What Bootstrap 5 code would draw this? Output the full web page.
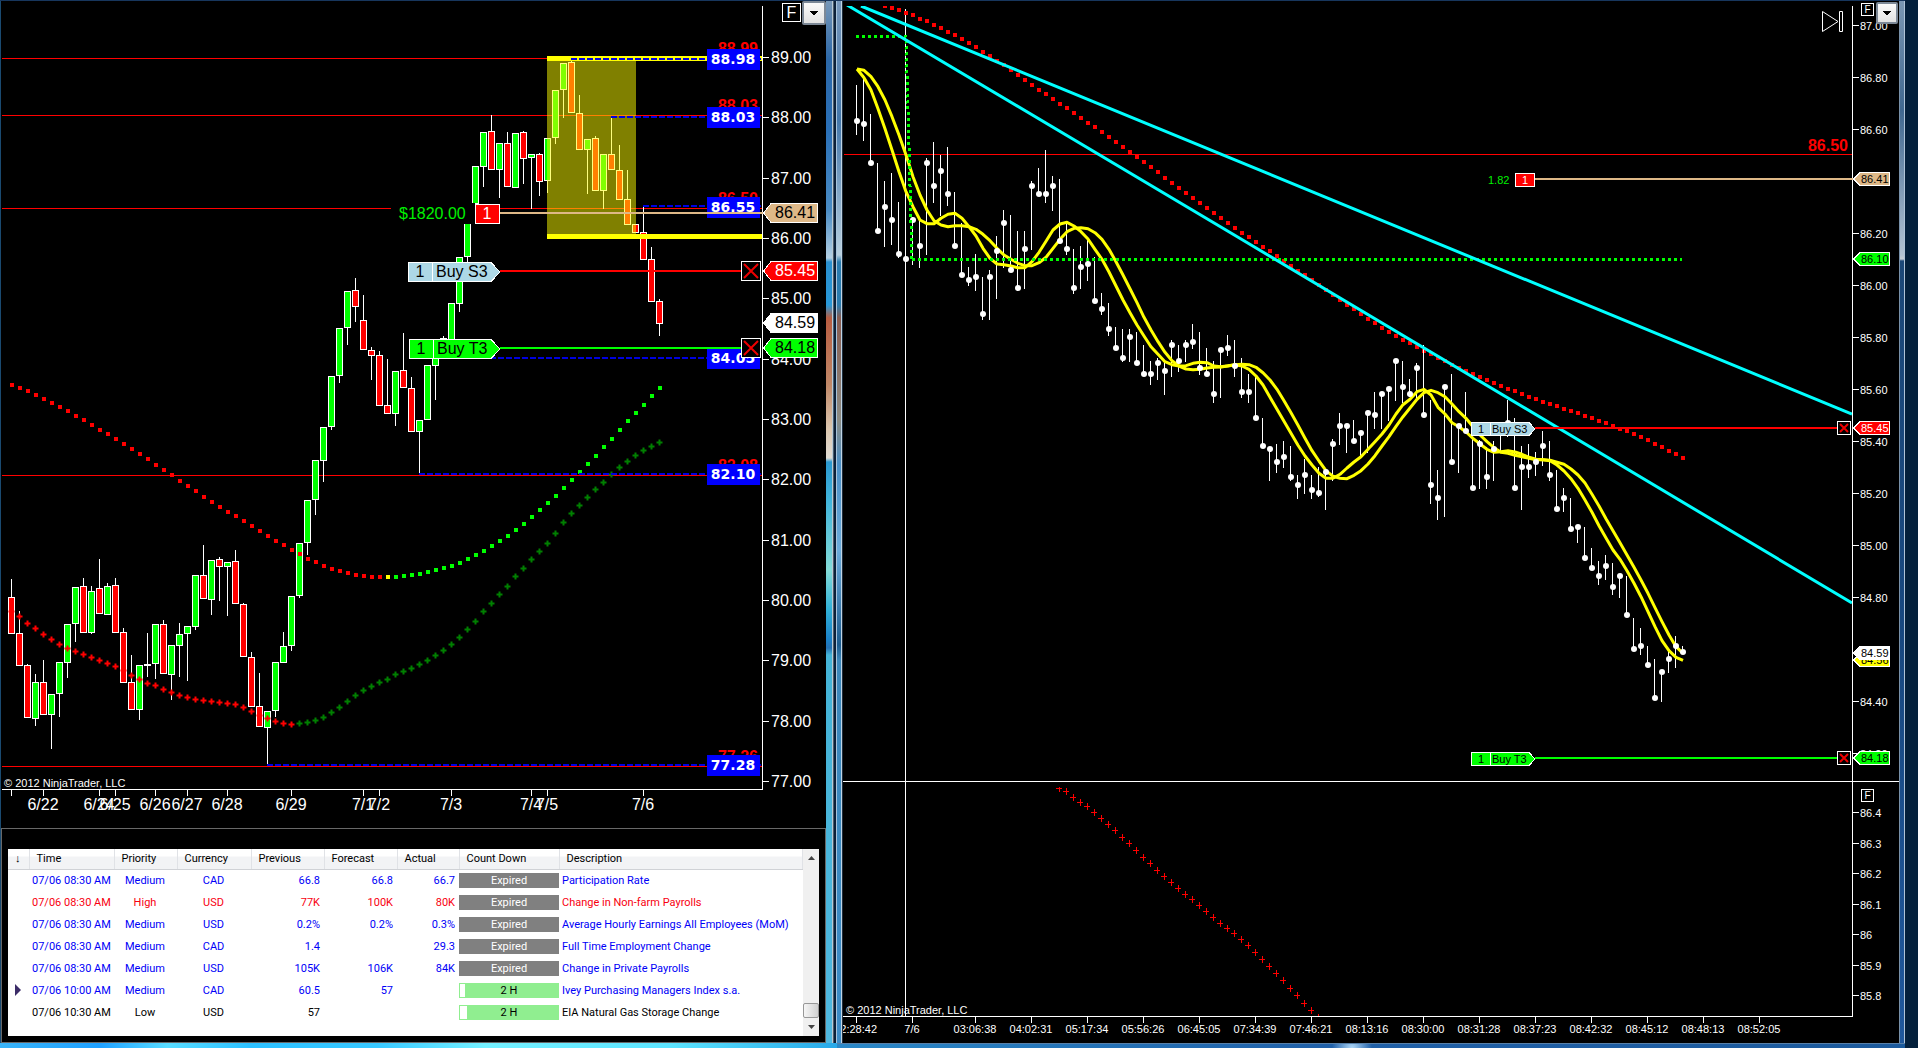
<!DOCTYPE html>
<html lang="en">
<head>
<meta charset="utf-8">
<meta name="viewport" content="width=device-width, initial-scale=1">
<title>NinjaTrader charts</title>
<link href="https://cdn.jsdelivr.net/npm/bootstrap@5.3.0/dist/css/bootstrap.min.css" rel="stylesheet">
<style>
  body { background: #04203c; font-family: "Liberation Sans", Arial, sans-serif; }
  .desk { display: grid; grid-template-columns: minmax(0, 837fr) minmax(0, 1068fr) minmax(0, 13fr); }

  /* glass window frames */
  .win-left {
    padding: 1px 11px 5px 1px;
    background:
      linear-gradient(#17365d, #17365d) top / 100% 1px no-repeat,
      linear-gradient(90deg, #3ab4f8, #1ea0ff 12%, #58dcff 20%, #2cc0ff 30%, #38c8ff 45%, #74f0ff 58%, #5ce4ff 80%, #28a8e8) bottom / 100% 5px no-repeat,
      linear-gradient(90deg, transparent 6px, #b8c8d4 6px 7px, #4a5c6c 7px 8px, #0c2038 8px 10px, #a8c4dc 10px) right / 11px 100% no-repeat,
      linear-gradient(90deg, #1a4a70 1px, transparent 1px),
      linear-gradient(#7898b8 0, #2c68a8 60px, #2a70b8 130px, #4a8cc4 210px, #b4d0e4 258px, #2a90d0 262px, #2898d8 305px, #b85c40 318px, #c08868 385px, #dcc8b0 430px, #e0dcd4 458px, #2a98d0 462px, #40b4dc 500px, #84dcd8 570px, #30b0d8 610px, #1a80c8 640px, #2470b4 648px, #44b4d8 655px, #50b8e0 100%);
  }
  .win-right {
    padding: 1px 6px 5px 6px;
    background:
      linear-gradient(#17365d, #17365d) top / 100% 1px no-repeat,
      linear-gradient(#5880a8, #5880a8) 0 calc(100% - 4px) / 100% 1px no-repeat,
      radial-gradient(circle at 515px 4px, #b0d8f8, transparent 20px) bottom / 100% 4px no-repeat,
      linear-gradient(90deg, #2a88c8, #2060a8 45%, #1c5a9c) bottom / 100% 4px no-repeat,
      linear-gradient(90deg, #7890a8 1px, transparent 1px 5px, #b0c4d8 5px) right / 6px 100% no-repeat,
      linear-gradient(#7c98b4 0, #406890 110px, #b4c4d4 255px, #c8d0d8 259px, #1c4878 261px, #184880 60%, #20589c 100%) right / 6px 100% no-repeat,
      linear-gradient(90deg, transparent 4px, #c0d4e4 4px 5px, #203040 5px) left / 6px 100% no-repeat,
      linear-gradient(#7898bc 0, #4478ac 120px, #b8d0e0 255px, #2a7cb0 262px, #2a7cb0 305px, #8a5c50 318px, #8c8c84 420px, #4a90c8 465px, #6cacdc 550px, #1c5c90 645px, #3c88bc 660px, #3c8cc8 100%);
  }
  .chart-svg { display: block; width: 100%; height: 100%; background: #000; shape-rendering: crispEdges; font-family: "Liberation Sans", Arial, sans-serif; }
  .t16 { font-size: 16px; fill: #fff; }
  .t11 { font-size: 11px; fill: #fff; }
  .mid { text-anchor: middle; }
  .right { text-anchor: end; }
  .lvl-red { fill: #f00; font-size: 16px; font-weight: 700; text-anchor: end; }
  .lvl-blue { fill: #fff; font: 700 14px "DejaVu Sans", sans-serif; text-anchor: middle; }
  .ink { fill: #000; }
  .gain { fill: #00f000; }

  .box-btn { display: block; width: 100%; height: 100%; padding: 0; border: 1px solid #fff; background: #000; color: #fff; line-height: 1; text-align: center; }
  .box-btn svg { display: block; width: 100%; height: 100%; shape-rendering: auto; }
  .f16 { font-size: 16px; }
  .f11 { font-size: 10px; }
  .drop-btn { display: block; width: 100%; height: 100%; padding: 0; border: 2px solid #7c8896; background: linear-gradient(#fafafa, #e2e2e2); border-radius: 2px; }
  .drop-btn svg { display: block; width: 100%; height: 100%; }

  /* economic calendar */
  .cal-panel { border: 1px solid #686868; padding: 20px 6px 6px 6px; background: #000; }
  .cal-box { background: #fff; min-height: 187px; }
  .cal-table { table-layout: fixed; width: 100%; font-family: Roboto, "Liberation Sans", sans-serif; font-size: 11px; line-height: 15px; color: #000; --bs-table-bg: transparent; }
  .cal-table th { height: 20px; padding: 0 0 0 7px; font-weight: 400; vertical-align: middle; white-space: nowrap; border: 0; border-right: 1px solid #e0e2e6; border-bottom: 1px solid #d0d2d6; background: linear-gradient(#fff 35%, #f2f3f5 40%); }
  .cal-table td { height: 22px; padding: 0 4px 0 3px; color: inherit; white-space: nowrap; border: 0; vertical-align: middle; overflow: hidden; }
  .cal-table td.cd-cell { padding: 0; }
  .imp-med { color: #0000f8; }
  .imp-high { color: #f80010; }
  .cd { height: 15px; text-align: center; }
  .cd-exp { background: #808080; color: #fff; }
  .cd-run { line-height: 13px; border: 1px solid #90ee90; color: #000; background: linear-gradient(90deg, #fff var(--gone), #90ee90 0); }
  .sbar { width: 16px; background: #f0f0f0; }
  .sbar button { padding: 0; border: 0; background: transparent; height: 18px; line-height: 0; }
  .sthumb { height: 15px; border: 1px solid #989898; border-radius: 2px; background: linear-gradient(90deg, #f6f6f6, #d0d0d0); }
</style>
<script src="https://cdn.jsdelivr.net/npm/bootstrap@5.3.0/dist/js/bootstrap.bundle.min.js"></script>
</head>
<body>
<main class="desk vh-100 overflow-hidden">

  <section class="win-left d-flex flex-column vh-100" aria-label="Session chart and calendar">
    <div class="flex-grow-1" style="min-height:0">
      <svg class="chart-svg" viewBox="1 1 825 827" role="group" aria-label="Candlestick chart">
        <g id="l-levels"></g>
        <g id="l-candles"></g>
        <rect x="547" y="56" width="89" height="183" fill="#ff0" fill-opacity=".5"/>
        <path d="M547 58.5H762M547 236.5H762" stroke="#ff0" stroke-width="5"/>
        <g id="l-ma"></g>
        <g id="l-tags-low"></g>
        <path d="M762.5 6V789.5M2 789.5H763" stroke="#fff" fill="none"/>
        <g id="l-axis"></g>
        <text class="t11" x="4" y="787">© 2012 NinjaTrader, LLC</text>

        <rect x="391" y="203" width="84" height="21" fill="#000"/>
        <text class="t16 gain" x="399" y="219">$1820.00</text>
        <path d="M500 213H763" stroke="#deb887" stroke-width="2"/>
        <rect x="475.500" y="204.500" width="24" height="19" fill="#f00" stroke="#fff"/>
        <text class="t16 mid" x="487" y="219">1</text>
        <path d="M500 271H741" stroke="#f00" stroke-width="2"/>
        <path d="M408.500 262.500H491L500 272L491 281.500H408.500ZM432.500 262V282" fill="#add8e6" stroke="#fff"/>
        <text class="t16 ink mid" x="420" y="277">1</text>
        <text class="t16 ink" x="436" y="277">Buy S3</text>
        <path d="M500 348H741" stroke="#0f0" stroke-width="2"/>
        <path d="M409.500 339.500H491L500 349L491 358.500H409.500ZM433.500 339V359" fill="#0f0" stroke="#fff"/>
        <text class="t16 ink mid" x="421" y="354">1</text>
        <text class="t16 ink" x="437" y="354">Buy T3</text>
        <g id="l-prices"></g>
        <foreignObject x="741" y="261" width="20" height="20"><button type="button" class="box-btn" aria-label="Cancel Buy S3"><svg viewBox="0 0 18 18"><path d="M2 2L16 16M16 2L2 16" stroke="#e00" stroke-width="2"/></svg></button></foreignObject>
        <foreignObject x="741" y="338" width="20" height="20"><button type="button" class="box-btn" aria-label="Cancel Buy T3"><svg viewBox="0 0 18 18"><path d="M2 2L16 16M16 2L2 16" stroke="#e00" stroke-width="2"/></svg></button></foreignObject>
        <foreignObject x="782" y="3" width="19" height="19"><button type="button" class="box-btn f16">F</button></foreignObject>
        <foreignObject x="802" y="1" width="24" height="24"><button type="button" class="drop-btn" aria-label="Chart menu"><svg viewBox="0 0 20 20"><path d="M5 7.500H15L10 12.500Z" fill="#000"/></svg></button></foreignObject>
      </svg>
    </div>

    <div class="cal-panel">
      <div class="cal-box d-flex">
        <div class="flex-grow-1 overflow-hidden">
          <table class="table table-borderless cal-table mb-0">
            <colgroup><col style="width:21px"><col style="width:85px"><col style="width:63px"><col style="width:74px"><col style="width:73px"><col style="width:73px"><col style="width:62px"><col style="width:100px"><col></colgroup>
            <thead><tr><th scope="col">↓</th><th scope="col">Time</th><th scope="col">Priority</th><th scope="col">Currency</th><th scope="col">Previous</th><th scope="col">Forecast</th><th scope="col">Actual</th><th scope="col">Count Down</th><th scope="col">Description</th></tr></thead>
            <tbody>
              <tr class="imp-med"><td></td><td>07/06 08:30 AM</td><td class="text-center">Medium</td><td class="text-center">CAD</td><td class="text-end">66.8</td><td class="text-end">66.8</td><td class="text-end">66.7</td><td class="cd-cell"><div class="cd cd-exp">Expired</div></td><td>Participation Rate</td></tr>
              <tr class="imp-high"><td></td><td>07/06 08:30 AM</td><td class="text-center">High</td><td class="text-center">USD</td><td class="text-end">77K</td><td class="text-end">100K</td><td class="text-end">80K</td><td class="cd-cell"><div class="cd cd-exp">Expired</div></td><td>Change in Non-farm Payrolls</td></tr>
              <tr class="imp-med"><td></td><td>07/06 08:30 AM</td><td class="text-center">Medium</td><td class="text-center">USD</td><td class="text-end">0.2%</td><td class="text-end">0.2%</td><td class="text-end">0.3%</td><td class="cd-cell"><div class="cd cd-exp">Expired</div></td><td>Average Hourly Earnings All Employees (MoM)</td></tr>
              <tr class="imp-med"><td></td><td>07/06 08:30 AM</td><td class="text-center">Medium</td><td class="text-center">CAD</td><td class="text-end">1.4</td><td></td><td class="text-end">29.3</td><td class="cd-cell"><div class="cd cd-exp">Expired</div></td><td>Full Time Employment Change</td></tr>
              <tr class="imp-med"><td></td><td>07/06 08:30 AM</td><td class="text-center">Medium</td><td class="text-center">USD</td><td class="text-end">105K</td><td class="text-end">106K</td><td class="text-end">84K</td><td class="cd-cell"><div class="cd cd-exp">Expired</div></td><td>Change in Private Payrolls</td></tr>
              <tr class="imp-med"><td><svg class="d-block ms-1" width="6" height="12" viewBox="0 0 6 12" aria-hidden="true"><path d="M0 0L6 6L0 12Z" fill="#3c2c68"/></svg></td><td>07/06 10:00 AM</td><td class="text-center">Medium</td><td class="text-center">CAD</td><td class="text-end">60.5</td><td class="text-end">57</td><td></td><td class="cd-cell"><div class="cd cd-run" style="--gone:5%">2 H</div></td><td>Ivey Purchasing Managers Index s.a.</td></tr>
              <tr><td></td><td>07/06 10:30 AM</td><td class="text-center">Low</td><td class="text-center">USD</td><td class="text-end">57</td><td></td><td></td><td class="cd-cell"><div class="cd cd-run" style="--gone:7%">2 H</div></td><td>EIA Natural Gas Storage Change</td></tr>
            </tbody>
          </table>
        </div>
        <div class="sbar d-flex flex-column flex-shrink-0">
          <button type="button" aria-label="Scroll up"><svg width="7" height="4" viewBox="0 0 7 4"><path d="M0 4L3.500 0L7 4Z" fill="#444"/></svg></button>
          <div class="flex-grow-1"></div>
          <div class="sthumb"></div>
          <button type="button" aria-label="Scroll down"><svg width="7" height="4" viewBox="0 0 7 4"><path d="M0 0H7L3.500 4Z" fill="#444"/></svg></button>
        </div>
      </div>
    </div>
  </section>

  <section class="win-right vh-100" aria-label="Intraday chart">
    <svg class="chart-svg" viewBox="843 1 1056 1042" role="group" aria-label="Intraday range chart">
      <defs>
        <clipPath id="up"><rect x="843" y="6" width="1009" height="775"/></clipPath>
        <clipPath id="low"><rect x="843" y="787" width="1009" height="229"/></clipPath>
      </defs>
      <path d="M844 154.500H1852" stroke="#f00"/>
      <text class="lvl-red" x="1848" y="151">86.50</text>
      <path d="M905.500 9V1016" stroke="#fff"/>
      <g clip-path="url(#up)">
        <g id="r-red" fill="#f00"></g>
        <g id="r-bars" stroke="#fff"></g>
        <g id="r-yellow" fill="none" stroke="#ff0" stroke-width="3" stroke-linejoin="round" shape-rendering="auto"></g>
        <g id="r-dots" fill="#fff" shape-rendering="auto"></g>
        <path d="M856 36.500H906L912 259.500" fill="none" stroke="#0f0" stroke-width="3" stroke-dasharray="3 3"/>
        <path d="M912 259.500H1682" fill="none" stroke="#0f0" stroke-width="3" stroke-dasharray="3 3"/>
        <path d="M861 6L1852 414M847 5L1236 236L1852 603" fill="none" stroke="#0ff" stroke-width="3" shape-rendering="auto"/>
      </g>
      <g id="r-plus" stroke="#f00" clip-path="url(#low)"></g>
      <path d="M842 781.500H1899M1852.500 6V1016.500M843 1016.500H1853" stroke="#fff" fill="none"/>
      <g id="r-axis"></g>
      <text class="t11" x="846" y="1014">© 2012 NinjaTrader, LLC</text>
      <path d="M1822.500 11.500V31.500L1838 21.500ZM1839.500 11.500H1842.500V31.500H1839.500Z" stroke="#fff" fill="none" shape-rendering="auto"/>

      <text class="t11 gain" x="1488" y="184">1.82</text>
      <path d="M1535 179H1853" stroke="#deb887" stroke-width="2"/>
      <rect x="1515.500" y="173.500" width="19" height="13" fill="#f00" stroke="#fff"/>
      <text class="t11 mid" x="1525" y="184">1</text>
      <path d="M1535 428H1837" stroke="#f00" stroke-width="2"/>
      <path d="M1471.500 422.500H1529L1535 429L1529 435.500H1471.500ZM1490.500 422V436" fill="#add8e6" stroke="#fff"/>
      <text class="t11 ink mid" x="1481" y="433">1</text>
      <text class="t11 ink" x="1492" y="433">Buy S3</text>
      <path d="M1535 758H1837" stroke="#0f0" stroke-width="2"/>
      <path d="M1471.500 752.500H1529L1535 759L1529 765.500H1471.500ZM1490.500 752V766" fill="#0f0" stroke="#fff"/>
      <text class="t11 ink mid" x="1481" y="763">1</text>
      <text class="t11 ink" x="1492" y="763">Buy T3</text>
      <g id="r-prices"></g>
      <foreignObject x="1837" y="421" width="14" height="14"><button type="button" class="box-btn" aria-label="Cancel Buy S3"><svg viewBox="0 0 12 12"><path d="M2 2L10 10M10 2L2 10" stroke="#e00" stroke-width="2"/></svg></button></foreignObject>
      <foreignObject x="1837" y="751" width="14" height="14"><button type="button" class="box-btn" aria-label="Cancel Buy T3"><svg viewBox="0 0 12 12"><path d="M2 2L10 10M10 2L2 10" stroke="#e00" stroke-width="2"/></svg></button></foreignObject>
      <foreignObject x="1861" y="3" width="13" height="13"><button type="button" class="box-btn f11">F</button></foreignObject>
      <foreignObject x="1861" y="789" width="13" height="13"><button type="button" class="box-btn f11">F</button></foreignObject>
      <foreignObject x="1876" y="2" width="22" height="22"><button type="button" class="drop-btn" aria-label="Chart menu"><svg viewBox="0 0 18 18"><path d="M4 6.500H14L9 11.500Z" fill="#000"/></svg></button></foreignObject>
    </svg>
  </section>
</main>

<script>
const put = (id, html) => { document.getElementById(id).innerHTML = html; };

/* ---------- left chart ---------- */
// colour, high, body top, body bottom, low
const candles = `R 579 597 634 634|R 611 633 666 666|R 664 665 718 718|G 674 682 719 726|R 660 682 715 715|G 694 694 715 749|G 662 662 694 717|G 624 624 663 678|G 587 587 624 642|R 578 586 633 633|G 586 591 633 634|R 559 588 614 614|G 583 586 615 615|R 578 585 633 633|R 628 632 683 683|R 655 682 710 710|G 665 665 710 720|G 633 664 666 677|G 624 624 664 679|R 620 624 674 674|G 645 645 675 700|G 623 634 646 677|G 626 626 634 681|G 575 575 627 630|R 545 575 599 599|G 560 560 600 615|R 557 559 567 601|G 562 562 567 616|R 550 561 604 604|R 603 604 657 657|R 652 657 707 707|R 673 706 727 727|G 711 711 728 765|G 662 662 711 717|G 632 646 663 663|G 596 596 646 651|G 543 543 596 598|G 500 500 543 555|G 460 460 500 515|G 427 427 461 482|G 376 376 427 430|G 328 328 376 383|G 291 291 328 345|R 278 290 307 322|R 295 320 350 350|R 347 350 356 380|R 351 355 406 406|R 359 405 414 414|G 371 371 414 426|R 333 370 388 388|R 377 388 432 432|G 420 420 432 474|G 365 365 420 420|G 345 345 366 400|G 336 338 346 346|G 303 303 340 340|G 257 257 304 312|G 204 204 257 262|G 166 166 204 204|G 132 132 167 187|R 115 131 170 170|G 143 143 170 198|R 132 143 187 187|G 133 133 188 188|R 131 132 159 184|G 154 154 158 209|R 153 154 182 196|G 138 138 181 193|G 90 90 138 144|G 63 63 90 118|R 60 62 113 113|R 95 113 150 150|G 139 139 150 194|R 136 138 191 191|G 154 154 191 209|R 116 154 170 170|R 145 170 200 200|R 170 199 225 225|R 224 224 233 233|R 205 232 260 260|R 247 259 302 302|R 299 301 324 336`;
put('l-candles', candles.split('|').map((row, i) => {
  const [c, h, t, b, l] = row.split(' ');
  const x = 8 + 8 * i, fill = c === 'G' ? '#0f0' : '#f00';
  const body = b - t > 2
    ? `<rect x="${x + .5}" y="${+t + .5}" width="6" height="${b - t - 1}" fill="${fill}" stroke="#fff"/>`
    : `<rect x="${x}" y="${t}" width="7" height="2" fill="#fff"/>`;
  return `<path d="M${x + 3.5} ${h}V${l}" stroke="#fff"/>${body}`;
}).join(''));

const maSlow = [385,388,391,395,399,403,407,411,416,420,425,430,434,439,444,449,454,459,465,470,475,481,486,491,497,502,507,512,516,521,526,531,536,541,545,550,554,559,562,566,569,571,573,575,576,577,577,577,577,576,575,574,572,570,568,566,563,559,555,551,546,541,536,530,524,517,510,503,496,488,480,472,464,456,447,439,430,421,413,405,396,388];
const maCross = [611,616,623,628,634,639,644,648,651,654,657,660,663,666,670,675,679,683,685,689,692,695,697,699,700,701,702,703,704,707,711,715,718,721,723,724,723,722,720,717,712,707,701,695,690,686,682,679,674,671,668,664,660,655,650,644,637,629,621,611,603,594,586,576,568,559,551,543,533,522,513,505,497,489,482,474,467,461,455,450,446,442];
put('l-ma',
  maSlow.map((y, i) => `<rect x="${10 + 8 * i}" y="${y - 2}" width="4" height="4" fill="${i < 47 ? '#f00' : i === 47 ? '#ff0' : '#0f0'}"/>`).join('') +
  maCross.map((y, i) => `<path d="M${8.5 + 8 * i} ${y + .5}h6M${11.5 + 8 * i} ${y - 2.5}v6" stroke="${i < 36 ? '#f00' : '#008000'}" stroke-width="2" shape-rendering="auto"/>`).join(''));

put('l-levels',
  [58, 115, 208, 475, 766].map(y => `<path d="M2 ${y + .5}H762" stroke="#f00"/>`).join(''));
const redLv = [['88.99', 54], ['88.03', 111], ['86.50', 204], ['82.08', 471], ['77.26', 762]];
const blueLv = [['88.98', 49, 58, 571], ['88.03', 107, 116, 611], ['86.55', 197, 205, 643], ['84.05', 348, 357, 490], ['82.10', 464, 473, 419], ['77.28', 755, 764, 267]];
put('l-tags-low',
  redLv.map(([t, y]) => `<text class="lvl-red" x="758" y="${y}">${t}</text>`).join('') +
  blueLv.map(([t, y, ly, x]) => `<path d="M${x} ${ly + 1}H762" stroke="#0000e0" stroke-width="2" stroke-dasharray="6 2"/><rect x="707" y="${y}" width="53" height="21" fill="#00f"/><text class="lvl-blue" x="733" y="${y + 15}">${t}</text>`).join(''));

let ax = '';
for (let p = 89; p >= 77; p--) {
  const y = Math.round(57 + 60.33 * (89 - p));
  ax += `<path d="M762 ${y + .5}h7" stroke="#fff"/><text class="t16" x="771" y="${y + 6}">${p}.00</text>`;
}
[['6/22',43],['6/24',99],['6/25',115],['6/26',155],['6/27',187],['6/28',227],['6/29',291],['7/1',363],['7/2',379],['7/3',451],['7/4',531],['7/5',547],['7/6',643]]
  .forEach(([t, x]) => { ax += `<path d="M${x + .5} 790v6" stroke="#fff"/><text class="t16 mid" x="${x}" y="810">${t}</text>`; });
ax += '<path d="M11.5 790v6" stroke="#fff"/>';
put('l-axis', ax);

put('l-prices', [['86.41', 203, '#deb887', '#000'], ['85.45', 261, '#f00', '#fff'], ['84.59', 313, '#fff', '#000'], ['84.18', 338, '#0f0', '#000']]
  .map(([t, y, bg, fg]) => `<path d="M763.5 ${y + 10}L771 ${y + .5}H817.5V${y + 19.5}H771Z" fill="${bg}" stroke="#fff"/><text class="t16" style="fill:${fg}" x="775" y="${y + 15}">${t}</text>`).join(''));

/* ---------- right chart ---------- */
// dot, top, bottom in thirds of a pixel
const barsA = `363 255 405|372 225 423|489 342 489|693 489 693|621 543 741|660 519 735|762 606 774|777 777 777|660 650 795|738 660 804|489 474 765|558 426 609|513 465 648|582 441 618|738 576 738|825 669 825|840 801 858|831 762 873|942 831 960|831 810 960|753 708 897|669 630 804|810 645 810|864 693 864|747 693 867|558 543 750|582 504 582|582 450 609|558 528 633|723 537 723|747 672 765|864 747 882|801 738 867|792 714 843|903 771 903|927 879 945|987 909 1008|1044 981 1044|1074 987 1086|1011 987 1086|1089 996 1089|1122 1035 1122|1122 1083 1155|1089 1074 1140|1113 1090 1185|1035 1020 1131|1083 1035 1116|1035 1020 1086|1026 972 1047|1104 996 1125|1122 1044 1122|1182 1083 1209|1050 1050 1194|1044 1005 1068`;
const barsB = `318 240 351|396 294 414|396 342 429|474 350 474|558 474 558|567 567 663|606 552 639|591 543 624|651 558 663|675 645 717|645 597 702|690 645 717|699 621 711|636 636 750|552 537 663|498 459 555|498 498 579|543 480 543|519 519 594|459 459 579|465 396 507|402 402 507|387 387 483|303 303 423|381 303 430|402 357 410|324 309 423|465 255 465|675 420 732|714 630 780|381 381 771|606 342 606|498 498 639|513 396 513|684 530 684|552 540 687|651 560 687|567 543 663|510 500 579|489 420 530|684 474 684|621 558 750|621 552 654|606 576 648|558 513 618|645 543 663|747 630 747|714 684 756|807 714 807|801 801 849|894 801 894|924 864 924|948 903 975|918 885 960|981 909 1005|948 948 1014|1065 948 1065|1167 1074 1167|1158 1104 1185|1215 1158 1215|1314 1197 1314|1236 1236 1326|1197 1167 1239|1158 1128 1224|1176 1158 1176`;
const bars = barsA.split('|').map(r => r.split(' ').map(v => v / 3))
  .concat(barsB.split('|').map(r => r.split(' ').map(v => 260 + v / 3)));
put('r-bars', bars.map(([d, t, b], k) => `<path d="M${856.5 + 7 * k} ${Math.round(t)}V${Math.round(b)}"/>`).join(''));
put('r-dots', bars.map(([d], k) => `<circle cx="${857 + 7 * k}" cy="${Math.round(d)}" r="3"/>`).join(''));

const red = [6,8,10,13,15,19,21,25,28,32,35,39,43,47,52,56,61,65,70,75,80,85,90,94,99,104,108,113,118,123,127,132,137,142,147,152,157,162,167,172,178,183,188,193,198,203,208,213,218,223,228,233,237,242,247,251,256,261,266,271,275,280,285,290,295,300,305,309,314,319,323,328,332,336,340,343,347,351,354,358,361,365,368,371,374,377,380,383,386,389,391,394,397,399,402,404,406,409,411,413,416,418,421,423,426,429,431,434,437,440,444,447,451,454,458];
put('r-red', red.map((y, k) => `<rect x="${883 + 7 * k}" y="${y - 2}" width="4" height="4"/>`).join(''));

const fastA = [207,233,270,326,386,450,515,575,620,660,671,671,655,643,640,655,680,708,745,775,792,794,798,803,803,785,757,724,690,672,667,678,695,717,748,778,816,858,900,938,975,1008,1040,1063,1085,1094,1098,1097,1090,1087,1088,1098,1100,1097];
const slowA = [207,211,230,260,300,350,405,465,530,585,630,662,675,680,677,677,680,688,703,722,745,765,778,790,797,797,788,772,745,718,695,685,683,686,698,718,748,785,825,866,908,952,990,1025,1057,1082,1098,1107,1109,1108,1104,1102,1101,1098];
const fastB = [314,318,328,348,375,412,448,484,520,556,588,615,640,655,655,643,624,606,590,568,545,522,495,462,434,418,395,388,405,442,462,488,500,516,535,552,568,577,575,572,576,583,592,598,599,602,615,633,656,685,720,757,797,834,870,898,932,970,1010,1055,1100,1142,1172,1192,1201];
const slowB = [314,313,314,322,338,360,388,422,458,496,535,572,603,632,649,655,656,646,632,612,587,558,530,499,470,444,418,398,391,398,410,432,455,475,500,525,545,563,577,580,586,590,595,599,599,601,607,613,627,645,669,703,738,776,812,848,885,922,960,1000,1043,1085,1125,1160,1180];
const line = (a, b) => '<polyline points="' + a.map(v => v / 3).concat(b.map(v => 260 + v / 3))
  .map((y, k) => `${857 + 7 * k},${y.toFixed(1)}`).join(' ') + '"/>';
put('r-yellow', line(fastA, fastB) + line(slowA, slowB));

const plus = [203,214,232,247,259,277,295,313,331,352,370,391,412,430,451,469,487,505,523,538,556,574,592,610,625,640,658,676,697,718,739,760,781,805,826,850,871,892];
put('r-plus', plus.map((v, k) => {
  const x = 1059 + 7 * k, y = Math.round(720 + v / 3);
  return `<path d="M${x - 3} ${y + .5}h6M${x + .5} ${y - 3}v7"/>`;
}).join(''));

let rx = '';
for (let n = 0; n <= 14; n++) {
  if (n === 3 || n === 12) continue;
  const y = Math.round(25 + 52.03 * n);
  rx += `<path d="M1853 ${y + .5}h6" stroke="#fff"/><text class="t11" x="1860" y="${y + 5}">${(87 - n * .2).toFixed(2)}</text>`;
}
['86.4', '86.3', '86.2', '86.1', '86', '85.9', '85.8'].forEach((t, n) => {
  const y = Math.round(812 + 30.5 * n);
  rx += `<path d="M1853 ${y + .5}h6" stroke="#fff"/><text class="t11" x="1860" y="${y + 5}">${t}</text>`;
});
rx += '<path d="M856.5 1017v6M912.5 1017v6" stroke="#fff"/><text class="t11 right" x="877" y="1033">2:28:42</text><text class="t11 mid" x="912" y="1033">7/6</text>';
['03:06:38','04:02:31','05:17:34','05:56:26','06:45:05','07:34:39','07:46:21','08:13:16','08:30:00','08:31:28','08:37:23','08:42:32','08:45:12','08:48:13','08:52:05'].forEach((t, n) => {
  const x = 975 + 56 * n;
  rx += `<path d="M${x + .5} 1017v6" stroke="#fff"/><text class="t11 mid" x="${x}" y="1033">${t}</text>`;
});
put('r-axis', rx);

put('r-prices', [['86.41', 172, '#deb887', '#000'], ['86.10', 252, '#0f0', '#000'], ['85.45', 421, '#f00', '#fff'], ['84.56', 653, '#ff0', '#000'], ['84.59', 646, '#fff', '#000'], ['84.18', 751, '#0f0', '#000']]
  .map(([t, y, bg, fg]) => `<path d="M1853.500 ${y + 7}L1860 ${y + .5}H1889.500V${y + 13.5}H1860Z" fill="${bg}" stroke="#fff"/><text class="t11" style="fill:${fg}" x="1861" y="${y + 11}">${t}</text>`).join(''));
</script>
</body>
</html>
